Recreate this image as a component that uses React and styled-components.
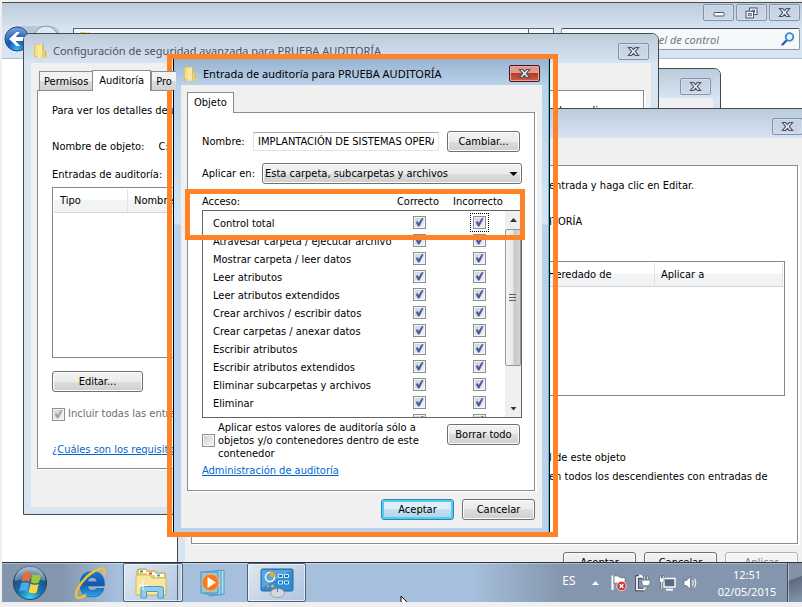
import React from 'react';
import styled, { createGlobalStyle, css } from 'styled-components';

const uiFont = '"DejaVu Sans Condensed", "Liberation Sans", sans-serif';
const titleFont = '"Noto Sans", "Open Sans", sans-serif';

const GlobalStyle = createGlobalStyle`
  *, *::before, *::after { box-sizing: border-box; }
  body { margin: 0; background: #f0f0f0; color: #000; font: 11px/16px ${uiFont}; }
  button, input, select { font: inherit; color: inherit; margin: 0; }
`;

/* ---------- desktop and explorer ---------- */

const Page = styled.div`
  display: flex;
  min-height: 100vh;
  padding: 2px 0 5px 2px;
  overflow: hidden;
`;

const Desktop = styled.main`
  position: relative;
  flex: 1;
  display: flex;
  flex-direction: column;
  overflow: hidden;
  background: #fff;
  border-top: 1px solid #4a4f55;
`;

const ExplorerHeader = styled.header`
  display: flex;
  flex-direction: column;
  justify-content: space-between;
  height: 56px;
  padding: 1px 2px 6px 0;
  background: linear-gradient(#bccbda, #d7e4f2 26px);
  border-bottom: 1px solid #b0c0d0;
`;

const CaptionButtons = styled.div`
  display: flex;
  justify-content: flex-end;
  gap: 2px;
`;

const CaptionButton = styled.button`
  display: grid;
  place-items: center;
  flex: none;
  width: 31px;
  height: 17px;
  padding: 0;
  border: 1px solid ${p => (p.$danger ? '#4d1511' : '#8191ae')};
  border-radius: 2px;
  box-shadow: inset 0 0 0 1px ${p => (p.$danger ? '#eaa79c' : '#d3dfec')};
  background: ${p => (p.$danger
    ? 'linear-gradient(#dd9a90 0 45%, #b83a26 50%, #c9604a)'
    : 'linear-gradient(#c3d1e0, #ccd9e7)')};
`;

const AddressRow = styled.div`
  display: flex;
  align-items: center;
`;

const NavButtons = styled.div`
  width: 71px;
  height: 27px;
`;

const AddressBar = styled.div`
  display: flex;
  align-items: center;
  justify-content: space-between;
  flex: 1;
  height: 22px;
  padding-left: 5px;
  background: #f5f8fb;
  border: 1px solid #59616a;
`;

const AddressRefresh = styled.div`
  width: 25px;
  height: 20px;
  border-left: 1px solid #59616a;
`;

const SearchBox = styled.div`
  display: flex;
  align-items: center;
  flex: none;
  width: 30%;
  height: 22px;
  margin-left: 7px;
  padding-right: 4px;
  background: #f5f9fc;
  border: 1px solid #8d98a4;
  border-top-color: #4a4f55;
  border-radius: 2px;
`;

const SearchInput = styled.input`
  flex: 1;
  min-width: 0;
  border: 0;
  background: none;
  padding: 2px 62px 0 0;
  text-align: right;
  font: italic 11px/18px ${titleFont};
  &::placeholder { color: #777; opacity: 1; }
`;

/* ---------- windows ---------- */

const Window = styled.section`
  position: absolute;
  display: flex;
  flex-direction: column;
  overflow: hidden;
  padding: 0 7px 7px;
  border: 1px solid #45484c;
  border-radius: 7px 7px 0 0;
  background: #d7e4f2;
`;

const AdvancedWindow = styled(Window)`
  left: 21px;
  top: 30px;
  width: 636px;
  height: 482px;
`;

const PropertiesWindow = styled(Window)`
  left: 300px;
  top: 65px;
  width: 419px;
  height: 300px;
`;

const AuditListWindow = styled(Window)`
  left: 175px;
  right: -11px;
  top: 105px;
  height: 520px;
  border-radius: 0;
`;

const EntryWindow = styled(Window)`
  left: 171px;
  top: 56px;
  width: 377px;
  height: 473px;
  padding: 0 7px 4px;
  border-width: 0 1px;
  border-color: #000;
  border-radius: 0;
  box-shadow: inset -1px 0 #3fc8ea;
  background: linear-gradient(#b9d1ea 26px, #d5e5f5 165px, #b9d1ea 166px);
`;

const TitleBar = styled.header`
  display: flex;
  align-items: center;
  flex: none;
  gap: 5px;
  height: 29px;
  margin: 0 -7px;
  padding: 5px ${p => p.$end || 9}px 0 9px;
  background: linear-gradient(#bccbda, #d7e4f2);
`;

const ActiveTitleBar = styled(TitleBar)`
  height: 26px;
  margin: 0 -6px 0 -7px;
  padding: 3px 8px 0 9px;
  background: linear-gradient(#99b4d1, #b9d1ea);
`;

const Title = styled.h1`
  flex: 1;
  margin: 0;
  color: ${p => (p.$dim ? '#4c5560' : '#000')};
  font: 400 11px/18px ${titleFont};
  white-space: nowrap;
`;

const Client = styled.div`
  display: flex;
  flex: 1;
  flex-direction: column;
  min-height: 0;
  padding: ${p => p.$pad || '7px 7px 8px 6px'};
  background: #f0f0f0;
`;

const Tabs = styled.div`
  position: relative;
  display: flex;
  align-items: flex-end;
  margin-bottom: -1px;
  z-index: 1;
`;

const Tab = styled.button`
  height: ${p => (p.$active ? 21 : 19)}px;
  padding: ${p => (p.$active ? 0 : 2)}px ${p => (p.$active ? 6 : 4)}px 1px;
  margin-bottom: ${p => (p.$active ? 0 : 1)}px;
  margin-left: ${p => (p.$first ? 2 : 0)}px;
  border: 1px solid #898c95;
  border-bottom: 0;
  border-right-width: ${p => (p.$active ? 1 : 0)}px;
  background: ${p => (p.$active ? '#fff' : 'linear-gradient(#f2f2f2 50%, #dcdcdc 50%, #d2d2d2)')};
  line-height: 16px;
`;

const Panel = styled.div`
  display: flex;
  flex-direction: column;
  flex: none;
  height: 379px;
  padding: ${p => p.$pad};
  border: 1px solid #898c95;
  box-shadow: 2px 1px 0 #fff;
  background: #fff;
`;

const Line = styled.p`
  display: flex;
  gap: ${p => p.$gap || 0}px;
  margin: ${p => p.$top || 0}px 0 0;
  white-space: nowrap;
`;

const FarText = styled.span`
  margin-left: auto;
  margin-right: 10px;
`;

const Button = styled.button`
  flex: none;
  width: ${p => (p.$wide ? 91 : 73)}px;
  height: 21px;
  padding: 1px 0 0;
  border: 1px solid #707070;
  border-radius: 3px;
  box-shadow: inset 0 0 0 1px #fcfcfc;
  background: linear-gradient(#f2f2f2, #ebebeb 50%, #dddddd 50%, #cfcfcf);
  line-height: 18px;
  ${p => p.$primary && css`
    border-color: #3c7fb1;
    box-shadow: inset 0 0 0 2px #48d0f5;
    background: linear-gradient(#e6f2f9, #dcebf5 50%, #c5dfee 50%, #b0d3e8);
  `}
  &:disabled {
    border-color: #adb2b5;
    background: #f4f4f4;
    color: #838383;
  }
`;

const Spaced = styled.div`
  display: flex;
  margin-top: ${p => p.$top}px;
`;

const Link = styled.a`
  color: #0066cc;
  text-decoration: underline;
`;

const ColumnTable = styled.table`
  display: block;
  flex: none;
  height: ${p => p.$height}px;
  margin-top: ${p => p.$top}px;
  padding: 1px;
  border: 1px solid #828790;
  border-collapse: collapse;
  background: #fff;
  thead { display: block; }
  tr {
    display: flex;
    height: 24px;
    border-bottom: 1px solid #d5d5d5;
    background: linear-gradient(#fff 45%, #f3f4f6 50%, #f1f2f4);
  }
`;

const ColumnHead = styled.th`
  flex: ${p => (p.$width ? 'none' : '1')};
  width: ${p => (p.$width ? `${p.$width}px` : 'auto')};
  padding: 4px 6px 0;
  border-right: 1px solid #dfe1e4;
  font-weight: 400;
  text-align: left;
`;

/* ---------- check boxes ---------- */

const CheckCell = styled.span`
  display: inline-grid;
  flex: none;
  width: 13px;
  height: 13px;
  outline: ${p => (p.$focus ? '1px dotted #000' : 'none')};
  outline-offset: 2px;
  > * { grid-area: 1 / 1; }
  svg { pointer-events: none; }
`;

const CheckInput = styled.input`
  appearance: none;
  width: 13px;
  height: 13px;
  border: 1px solid #8e8f8f;
  box-shadow: inset 0 0 0 1px #f4f4f4;
  background: linear-gradient(135deg, #cbcfd5, #f6f6f6);
`;

const CheckLabel = styled.label`
  display: flex;
  align-items: center;
  gap: 3px;
  color: ${p => (p.$dim ? '#6d6d6d' : '#000')};
  line-height: ${p => (p.$dim ? 16 : 13)}px;
  white-space: ${p => (p.$dim ? 'nowrap' : 'normal')};
`;

function Check({ checked, focus, disabled, ...rest }) {
  return (
    <CheckCell $focus={focus}>
      <CheckInput type="checkbox" defaultChecked={checked} disabled={disabled} {...rest} />
      {checked && (
        <svg width="13" height="13" viewBox="0 0 13 13" aria-hidden="true">
          <path d="M3 6.2 L4.6 5.4 L5.7 7.4 L8.8 2.4 L10.2 2.4 L6.3 10.2 L5.2 10.2 Z"
            fill={disabled ? '#a0a0a0' : '#42569c'} stroke={disabled ? '#a0a0a0' : '#42569c'} strokeWidth=".5" />
        </svg>
      )}
    </CheckCell>
  );
}

/* ---------- audit entry form ---------- */

const FormRow = styled.div`
  display: flex;
  align-items: center;
  margin-top: ${p => p.$top || 0}px;
  padding-right: ${p => p.$end || 0}px;
`;

const FieldLabel = styled.label`
  flex: none;
  width: ${p => p.$width}px;
`;

const NameInput = styled.input`
  flex: 1;
  min-width: 0;
  height: 19px;
  margin-right: 8px;
  padding: 0 4px;
  border: 1px solid #e2e3ea;
  border-top-color: #abadb3;
  background: #fff;
`;

const SelectWrap = styled.div`
  display: grid;
  flex: 1;
  align-items: center;
  > * { grid-area: 1 / 1; }
  svg { justify-self: end; margin-right: 4px; pointer-events: none; }
`;

const Select = styled.select`
  appearance: none;
  width: 100%;
  height: 21px;
  padding: 1px 20px 0 2px;
  border: 1px solid #707070;
  border-radius: 3px;
  box-shadow: inset 0 0 0 1px #fcfcfc;
  background: linear-gradient(#f2f2f2, #ebebeb 50%, #dddddd 50%, #cfcfcf);
`;

const AccessHead = styled.div`
  display: grid;
  grid-template-columns: 1fr 60px 60px;
  margin-top: 10px;
  padding-right: 14px;
  span + span { text-align: center; }
`;

const AccessList = styled.div`
  display: flex;
  flex: none;
  height: 208px;
  border: 1px solid #646464;
  background: #fff;
`;

const AccessRows = styled.div`
  flex: 1;
  overflow: hidden;
  padding: 3px 0 0 10px;
`;

const AccessRow = styled.div`
  display: grid;
  grid-template-columns: 1fr 60px 32px;
  align-items: start;
  height: 18px;
  line-height: 20px;
  white-space: nowrap;
  ${CheckCell} { margin-top: 2px; }
`;

const ScrollTrack = styled.div`
  display: flex;
  flex-direction: column;
  width: 16px;
  background: #efefef;
`;

const ScrollArrow = styled.button`
  display: grid;
  place-items: center;
  height: 17px;
  padding: 0;
  border: 0;
  background: none;
`;

const ScrollThumb = styled.div`
  display: grid;
  place-items: center;
  height: 137px;
  margin: 1px 0 auto;
  border: 1px solid #979797;
  border-radius: 2px;
  background: linear-gradient(90deg, #f5f5f5, #e6e6e6 50%, #c8c9cc 60%, #d4d4d6);
`;

const ApplyRow = styled.div`
  display: flex;
  align-items: flex-start;
  justify-content: space-between;
  margin-top: 3px;
  padding-right: 2px;
  ${Button} { margin-top: 3px; }
  ${CheckLabel} { flex: 1; }
`;

const DialogButtons = styled.div`
  display: flex;
  justify-content: flex-end;
  gap: 8px;
  margin-top: 8px;
`;

const Side = styled.div`
  display: flex;
  flex-direction: column;
  align-self: flex-end;
  width: 236px;
`;

const Highlight = styled.div`
  position: absolute;
  border: 5px solid #ff8227;
  pointer-events: none;
`;

const DialogHighlight = styled(Highlight)`
  left: 165px;
  top: 51px;
  width: 391px;
  height: 483px;
`;

const AccessHighlight = styled(Highlight)`
  left: 183px;
  top: 186px;
  width: 340px;
  height: 51px;
`;

/* ---------- taskbar ---------- */

const Taskbar = styled.footer`
  position: relative;
  display: flex;
  flex: none;
  height: 40px;
  margin-top: auto;
  border-top: 1px solid #2d3640;
  background: linear-gradient(90deg, #8496ad 60px, #a6bfdc 115px, #a6bfdc 470px, #8496ad 560px);
  box-shadow: inset 0 1px rgba(255, 255, 255, .35);
`;

const TaskButton = styled.button`
  display: grid;
  place-items: center;
  width: ${p => p.$width}px;
  padding: 0;
  border: 0;
  background: none;
  ${p => p.$open && css`
    border: 1px solid #4d6079;
    border-radius: 2px;
    box-shadow: inset 0 0 0 1px rgba(255, 255, 255, .6)${p.$stack ? ', inset -4px 0 #c3d0e0, inset -5px 0 #4d6079' : ''};
    background: linear-gradient(135deg, #dfe7f2, #c3d2e6 60%, #afc5e0);
    padding-right: ${p.$stack ? 5 : 0}px;
  `}
`;

const Tray = styled.div`
  display: flex;
  align-items: center;
  margin-left: auto;
  color: #fff;
  font: 11px/17px ${titleFont};
`;

const Language = styled.span`
  width: 28px;
  margin-bottom: 5px;
  text-align: center;
  font-size: 12px;
`;

const TrayButton = styled.button`
  display: grid;
  place-items: center;
  width: 24px;
  height: 24px;
  padding: 0;
  border: 0;
  background: none;
`;

const Clock = styled.time`
  width: 74px;
  margin: 0 3px 0 7px;
  text-align: center;
`;

const ShowDesktop = styled.button`
  align-self: stretch;
  width: 15px;
  padding: 0;
  border: 1px solid #3f4c5c;
  border-width: 0 0 0 1px;
  box-shadow: inset 1px 0 rgba(255, 255, 255, .4);
  background: linear-gradient(160deg, #8592a3 40%, #5c6b7e 42%, #8696ab);
`;

const Pointer = styled.svg`
  position: absolute;
  left: 398px;
  bottom: -13px;
`;

/* ---------- drawings ---------- */

const CloseIcon = () => (
  <svg width="13" height="11" viewBox="0 0 13 11" aria-hidden="true">
    <path d="M1.5 1.5 H4.6 L6.5 3.6 L8.4 1.5 H11.5 L8.3 5.5 L11.5 9.5 H8.4 L6.5 7.4 L4.6 9.5 H1.5 L4.7 5.5 Z"
      fill="#f7f8fa" stroke="#4b5266" strokeWidth="1.2" />
  </svg>
);

const MinimizeIcon = () => (
  <svg width="12" height="11" viewBox="0 0 12 11" aria-hidden="true">
    <rect x="1" y="5.5" width="10" height="3.5" rx=".8" fill="#fff" stroke="#4b5266" />
  </svg>
);

const RestoreIcon = () => (
  <svg width="13" height="12" viewBox="0 0 13 12" aria-hidden="true">
    <rect x="4.5" y="1" width="7.5" height="6.5" fill="#fff" stroke="#4b5266" />
    <rect x="7" y="3.2" width="2.6" height="2" fill="#cbd8e6" stroke="#4b5266" strokeWidth=".8" />
    <rect x="1" y="4.2" width="7.5" height="6.8" fill="#fff" stroke="#4b5266" />
    <rect x="3.3" y="6.6" width="3" height="2.2" fill="#cbd8e6" stroke="#4b5266" strokeWidth=".8" />
  </svg>
);

const FolderIcon = () => (
  <svg width="15" height="16" viewBox="0 0 15 16" aria-hidden="true">
    <path d="M1 1 H7 V14.500 L5 15.500 L1 13.500 Z" fill="#e0c260" />
    <path d="M2 1.500 H5 V13.500 L2 13 Z" fill="#f3dc83" />
    <path d="M4.500 2 L9.500 1 V14 L4.500 15.500 Z" fill="#f9e89f" />
    <path d="M9.500 1 L10.800 1.800 V14 L9.500 14 Z" fill="#d3b04a" />
    <path d="M9.800 7 L14 7.600 V14.500 L7 15.500 L9.800 13.800 Z" fill="#ead06c" />
    <path d="M12.500 8.500 V12.500" stroke="#8fb8dc" strokeWidth="1" />
  </svg>
);

const NavIcon = () => (
  <svg width="62" height="27" viewBox="0 0 62 27" aria-hidden="true">
    <defs>
      <radialGradient id="nav" cx=".5" cy=".9" r=".9">
        <stop offset="0" stopColor="#35b8f2" />
        <stop offset=".45" stopColor="#1455b0" />
        <stop offset="1" stopColor="#7ea4d8" />
      </radialGradient>
    </defs>
    <path d="M14 1 H48 Q58 1 58 12 V26 H14 Z" fill="#b8c6d5" />
    <circle cx="44" cy="13" r="12" fill="#dfe8f1" stroke="#8795a8" />
    <circle cx="15" cy="14" r="12" fill="url(#nav)" stroke="#274a7e" />
    <path d="M7 14 L14.5 7 H18 L13.5 12 H23 V16 H13.5 L18 21 H14.5 Z" fill="#fff" />
  </svg>
);

const SearchIcon = () => (
  <svg width="14" height="14" viewBox="0 0 14 14" aria-hidden="true">
    <path d="M1.5 12.5 L5.5 8.5" stroke="#2a5fa8" strokeWidth="2.4" strokeLinecap="round" />
    <circle cx="8.5" cy="5" r="3.8" fill="#e6f3fc" stroke="#3d86cc" strokeWidth="1.8" />
  </svg>
);

const ArrowIcon = ({ up, wide, color = '#333' }) => (
  <svg width="9" height="6" viewBox="0 0 9 6" aria-hidden="true">
    <path d={up ? 'M1 5 L4.5 1 L8 5 Z' : wide ? 'M.5 1 H8.5 L4.5 5 Z' : 'M1.5 1 H7.5 L4.5 4.5 Z'} fill={color} />
  </svg>
);

const StartIcon = () => (
  <svg width="36" height="36" viewBox="0 0 38 38" aria-hidden="true">
    <defs>
      <radialGradient id="orb" cx=".5" cy=".95" r=".9">
        <stop offset="0" stopColor="#35d5f8" />
        <stop offset=".4" stopColor="#1a74ae" />
        <stop offset=".75" stopColor="#204f7c" />
        <stop offset="1" stopColor="#7b9fbd" />
      </radialGradient>
    </defs>
    <circle cx="19" cy="19" r="17.5" fill="url(#orb)" stroke="#24435f" />
    <path d="M3 17 A16 16 0 0 1 35 17 Q19 12 3 17" fill="#fff" opacity=".3" />
    <path d="M12.500 9 Q16.500 6.500 20.500 9 L18.500 17.800 Q14.500 15.500 10 18 Z" fill="#ef6a2d" />
    <path d="M21.800 9.500 Q26 12 31 9.500 L28.500 18.500 Q24 20.500 19.800 18.300 Z" fill="#94cc3c" />
    <path d="M9.700 19.300 Q14 17 18.200 19.200 L16.200 28 Q12 25.500 7.500 28.200 Z" fill="#49a9ec" />
    <path d="M19.500 19.800 Q23.500 22 28.200 20 L26 29 Q21.500 31 17.500 28.700 Z" fill="#ffd141" />
  </svg>
);

const BrowserIcon = () => (
  <svg width="34" height="34" viewBox="0 0 34 34" aria-hidden="true">
    <defs>
      <linearGradient id="ie" x2="0" y2="1">
        <stop offset="0" stopColor="#1a77cd" />
        <stop offset=".5" stopColor="#1059ae" />
        <stop offset="1" stopColor="#2aa8f0" />
      </linearGradient>
    </defs>
    <path d="M31.500 20 H14.500 Q15 24.500 19.500 24.500 Q22.500 24.500 23.500 22.500 H31 Q28.500 31 19.500 31 Q7 31 7 18.500 Q7 5.500 19.500 5.500 Q32 5.500 31.500 20 Z M14.600 15.800 H24 Q23.500 11.500 19.300 11.500 Q15 11.500 14.600 15.800 Z"
      fill="url(#ie)" fillRule="evenodd" stroke="#0b4a96" strokeWidth=".5" />
    <path d="M30.500 9 Q34 1.500 27 3 Q17 6 9 16 Q1 27 3.500 31 Q6 34 13 28.500" fill="none" stroke="#f3c234" strokeWidth="2.400" />
  </svg>
);

const LibraryIcon = () => (
  <svg width="34" height="34" viewBox="0 0 34 34" aria-hidden="true">
    <path d="M3 5 Q3 3 5 3 H12 L14 5 H22 L24 7 H31 V29 H3 Z" fill="#ecd173" stroke="#bd9a3c" strokeWidth=".8" />
    <path d="M5 4 H12 V7 H5 Z M13 6 H21 V9 H13 Z M21 8 H30 V11 H21 Z" fill="#fff" />
    <path d="M6 4.500 H9 V6.500 H6 Z" fill="#30a848" />
    <path d="M15 6.500 H18 V8.500 H15 Z" fill="#d9432e" />
    <path d="M23 8.500 H26 V10.500 H23 Z" fill="#3b9ae0" />
    <path d="M2 9 H16 L18 12 H32 V29 H2 Z" fill="#f8e79f" stroke="#cfae50" strokeWidth=".8" />
    <path d="M7 32 V23 Q7 20.500 9.500 20.500 H27 Q29.500 20.500 29.500 23 V32 H24 V25.500 H12.500 V32 Z" fill="#8fcdeb" stroke="#4b9bc7" />
    <path d="M9 15 V24 M5 19.500 H14" stroke="#fff" strokeWidth="1" />
  </svg>
);

const MediaIcon = () => (
  <svg width="32" height="28" viewBox="0 0 32 28" aria-hidden="true">
    <path d="M10 3 L25 1 V25 L10 27 Z" fill="#b5dcf0" stroke="#4e9ac0" />
    <path d="M6 3 L22 1.500 V26 L6 25 Z" fill="#a1d0ea" stroke="#4e9ac0" />
    <path d="M2 3 H19 V24 H2 Z" fill="#8dc6e6" stroke="#4390ba" />
    <circle cx="11.500" cy="13.500" r="8.500" fill="#f57a1c" stroke="#fbb878" />
    <path d="M8.500 8 L17 13.500 L8.500 19 Z" fill="#fff" />
  </svg>
);

const ControlPanelIcon = () => (
  <svg width="34" height="30" viewBox="0 0 34 30" aria-hidden="true">
    <rect x="1" y="1" width="32" height="22" rx="1.500" fill="#2f8dd2" stroke="#23669f" />
    <path d="M1.500 2 H32 L2 20 Z" fill="#6fb7e6" opacity=".6" />
    <circle cx="10" cy="9" r="4.500" fill="none" stroke="#e8f5fd" strokeWidth="1.600" />
    <path d="M10 9 V3.500 A5.500 5.500 0 0 1 15.500 9 Z" fill="#f6a52b" />
    <circle cx="8" cy="18" r="1.500" fill="#f28f2c" />
    <circle cx="12.500" cy="18" r="1.500" fill="#f6b44a" />
    <path d="M18.500 6.500 H22.500 V9.500 H18.500 Z M24.500 6.500 H28.500 V9.500 H24.500 Z M18.500 13 H22.500 V16 H18.500 Z M24.500 13 H28.500 V16 H24.500 Z" fill="#1469b3" stroke="#d9effc" />
    <ellipse cx="17.500" cy="25" rx="7" ry="4.500" fill="#d5d7da" stroke="#83878c" strokeWidth=".7" />
    <path d="M17.500 20.500 V24" stroke="#777" />
  </svg>
);

const FlagIcon = () => (
  <svg width="18" height="18" viewBox="0 0 18 18" aria-hidden="true">
    <path d="M2.500 1.500 V16" stroke="#fff" strokeWidth="2" />
    <path d="M4 2 Q7 1 9.500 3 Q12 4.500 15 3.500 V10 Q12 11 9 9.500 Q7 8.500 4 9.500 Z" fill="#fff" stroke="#4f5c6c" strokeWidth=".6" />
    <circle cx="11.500" cy="12" r="4.700" fill="#d8322a" stroke="#fff" strokeWidth=".7" />
    <path d="M9.700 10.200 L13.300 13.800 M13.300 10.200 L9.700 13.800" stroke="#fff" strokeWidth="1.500" />
  </svg>
);

const PowerIcon = () => (
  <svg width="18" height="18" viewBox="0 0 18 18" aria-hidden="true">
    <path d="M8 3 H3 V15.500 H10" fill="none" stroke="#333e4c" strokeWidth="3.400" />
    <path d="M5 1.500 H8 M9 3 H3 V15.500 H10.500 V13" fill="none" stroke="#fff" strokeWidth="1.700" />
    <path d="M8 6 H16 V9 Q16 12 12 12 Q8 12 8 9 Z M9.500 2 H11 V6 H9.500 Z M13 2 H14.500 V6 H13 Z M11.200 12 H12.800 V16 H11.200 Z" fill="#fff" stroke="#3c4857" strokeWidth=".5" />
  </svg>
);

const NetworkIcon = () => (
  <svg width="18" height="18" viewBox="0 0 18 18" aria-hidden="true">
    <rect x="6" y="4.500" width="11" height="8.500" fill="#59697e" stroke="#fff" strokeWidth="1.400" />
    <path d="M8 15.700 H15" stroke="#fff" strokeWidth="1.800" />
    <path d="M1.500 1.500 H3 V4 H4.500 V1.500 H6 V7 Q6 8 4.600 8.300 V16 H3 V8.300 Q1.500 8 1.500 7 Z" fill="#fff" stroke="#34404e" strokeWidth=".5" />
  </svg>
);

const VolumeIcon = () => (
  <svg width="18" height="18" viewBox="0 0 18 18" aria-hidden="true">
    <path d="M2 6.500 H4.500 L8.500 2.500 V15.500 L4.500 11.500 H2 Z" fill="#fff" stroke="#4b5868" strokeWidth=".6" />
    <path d="M10.500 6 Q12 9 10.500 12 M12.700 4.500 Q15 9 12.700 13.500" fill="none" stroke="#fff" strokeWidth="1" />
  </svg>
);

/* ---------- data ---------- */

const permissions = [
  'Control total',
  'Atravesar carpeta / ejecutar archivo',
  'Mostrar carpeta / leer datos',
  'Leer atributos',
  'Leer atributos extendidos',
  'Crear archivos / escribir datos',
  'Crear carpetas / anexar datos',
  'Escribir atributos',
  'Escribir atributos extendidos',
  'Eliminar subcarpetas y archivos',
  'Eliminar',
  'Permisos de lectura',
];

const CloseButton = ({ danger }) => (
  <CaptionButton aria-label="Cerrar" $danger={danger}><CloseIcon /></CaptionButton>
);

function Explorer() {
  return (
    <ExplorerHeader>
      <CaptionButtons>
        <CaptionButton aria-label="Minimizar"><MinimizeIcon /></CaptionButton>
        <CaptionButton aria-label="Restaurar"><RestoreIcon /></CaptionButton>
        <CloseButton />
      </CaptionButtons>
      <AddressRow>
        <NavButtons><NavIcon /></NavButtons>
        <AddressBar><FolderIcon /><AddressRefresh /></AddressBar>
        <SearchBox>
          <SearchInput aria-label="Buscar" placeholder="Panel de control" />
          <SearchIcon />
        </SearchBox>
      </AddressRow>
    </ExplorerHeader>
  );
}

function AdvancedSecurity() {
  return (
    <AdvancedWindow>
      <TitleBar>
        <FolderIcon />
        <Title $dim>Configuración de seguridad avanzada para PRUEBA AUDITORÍA</Title>
        <CloseButton />
      </TitleBar>
      <Client $pad="7px 7px 37px 6px">
        <Tabs>
          <Tab $first>Permisos</Tab>
          <Tab $active>Auditoría</Tab>
          <Tab>Pro</Tab>
        </Tabs>
        <Panel $pad="12px 14px 0">
          <Line>
            <span>Para ver los detalles de u</span>
            <FarText>haga clic en</FarText>
          </Line>
          <Line $top={20} $gap={14}><span>Nombre de objeto:</span><span>C:\</span></Line>
          <Line $top={12}>Entradas de auditoría:</Line>
          <ColumnTable $height={171} $top={4}>
            <thead>
              <tr><ColumnHead $width={74}>Tipo</ColumnHead><ColumnHead>Nombre</ColumnHead></tr>
            </thead>
          </ColumnTable>
          <Spaced $top={13}><Button $wide>Editar...</Button></Spaced>
          <Spaced $top={14}>
            <CheckLabel $dim><Check checked disabled />Incluir todas las entrad</CheckLabel>
          </Spaced>
          <Line $top={20}><Link href="#requisitos">¿Cuáles son los requisito</Link></Line>
        </Panel>
      </Client>
    </AdvancedWindow>
  );
}

function AuditList() {
  return (
    <AuditListWindow>
      <TitleBar $end={9}><Title /><CloseButton /></TitleBar>
      <Client $pad="27px 7px 8px 6px">
        <Panel $pad="12px 12px 0 14px">
          <Side>
            <Line>entrada y haga clic en Editar.</Line>
            <Line $top={20}>ITORÍA</Line>
          </Side>
          <ColumnTable $height={135} $top={31}>
            <thead>
              <tr>
                <ColumnHead />
                <ColumnHead $width={113}>Heredado de</ColumnHead>
                <ColumnHead $width={128}>Aplicar a</ColumnHead>
              </tr>
            </thead>
          </ColumnTable>
          <Side>
            <Line $top={54}>l de este objeto</Line>
            <Line $top={3}>en todos los descendientes con entradas de</Line>
          </Side>
        </Panel>
        <DialogButtons>
          <Button>Aceptar</Button>
          <Button>Cancelar</Button>
          <Button disabled>Aplicar</Button>
        </DialogButtons>
      </Client>
    </AuditListWindow>
  );
}

function AuditEntry() {
  return (
    <EntryWindow>
      <ActiveTitleBar>
        <FolderIcon />
        <Title>Entrada de auditoría para PRUEBA AUDITORÍA</Title>
        <CloseButton danger />
      </ActiveTitleBar>
      <Client>
        <Tabs><Tab $active>Objeto</Tab></Tabs>
        <Panel $pad="18px 12px 0 14px">
          <FormRow $end={2}>
            <FieldLabel htmlFor="name" $width={51}>Nombre:</FieldLabel>
            <NameInput id="name" defaultValue="IMPLANTACIÓN DE SISTEMAS OPERATIVOS" />
            <Button>Cambiar...</Button>
          </FormRow>
          <FormRow $top={11}>
            <FieldLabel htmlFor="scope" $width={60}>Aplicar en:</FieldLabel>
            <SelectWrap>
              <Select id="scope"><option>Esta carpeta, subcarpetas y archivos</option></Select>
              <ArrowIcon wide color="#000" />
            </SelectWrap>
          </FormRow>
          <AccessHead><span>Acceso:</span><span>Correcto</span><span>Incorrecto</span></AccessHead>
          <AccessList>
            <AccessRows>
              {permissions.map((name, i) => (
                <AccessRow key={name}>
                  <span>{name}</span>
                  <Check checked aria-label={`${name}: correcto`} />
                  <Check checked focus={i === 0} aria-label={`${name}: incorrecto`} />
                </AccessRow>
              ))}
            </AccessRows>
            <ScrollTrack>
              <ScrollArrow aria-label="Subir"><ArrowIcon up /></ScrollArrow>
              <ScrollThumb>
                <svg width="8" height="9" viewBox="0 0 8 9" aria-hidden="true">
                  <path d="M0 1.500 H7 M0 4.500 H7 M0 7.500 H7" stroke="#5d5d5d" />
                </svg>
              </ScrollThumb>
              <ScrollArrow aria-label="Bajar"><ArrowIcon /></ScrollArrow>
            </ScrollTrack>
          </AccessList>
          <ApplyRow>
            <CheckLabel>
              <Check />
              <span>Aplicar estos valores de auditoría sólo a objetos y/o contenedores dentro de este contenedor</span>
            </CheckLabel>
            <Button>Borrar todo</Button>
          </ApplyRow>
          <Line $top={3}><Link href="#auditoria">Administración de auditoría</Link></Line>
        </Panel>
        <DialogButtons>
          <Button $primary>Aceptar</Button>
          <Button>Cancelar</Button>
        </DialogButtons>
      </Client>
    </EntryWindow>
  );
}

function TaskbarView() {
  return (
    <Taskbar>
      <TaskButton $width={55} aria-label="Inicio"><StartIcon /></TaskButton>
      <TaskButton $width={66} aria-label="Internet Explorer"><BrowserIcon /></TaskButton>
      <TaskButton $width={60} $open $stack aria-label="Explorador"><LibraryIcon /></TaskButton>
      <TaskButton $width={64} aria-label="Reproductor"><MediaIcon /></TaskButton>
      <TaskButton $width={59} $open aria-label="Panel de control"><ControlPanelIcon /></TaskButton>
      <Tray>
        <Language>ES</Language>
        <TrayButton aria-label="Mostrar iconos ocultos"><ArrowIcon up color="#fff" /></TrayButton>
        <TrayButton aria-label="Centro de actividades"><FlagIcon /></TrayButton>
        <TrayButton aria-label="Energía"><PowerIcon /></TrayButton>
        <TrayButton aria-label="Red"><NetworkIcon /></TrayButton>
        <TrayButton aria-label="Volumen"><VolumeIcon /></TrayButton>
        <Clock>12:51<br />02/05/2015</Clock>
        <ShowDesktop aria-label="Mostrar escritorio" />
      </Tray>
      <Pointer width="13" height="20" viewBox="0 0 13 20" aria-hidden="true">
        <path d="M1 1 V15 L4.500 12 L7 17 L9 16 L6.800 11.300 H11 Z" fill="#fff" stroke="#000" />
      </Pointer>
    </Taskbar>
  );
}

export default function App() {
  return (
    <Page>
      <GlobalStyle />
      <Desktop>
        <Explorer />
        <PropertiesWindow>
          <TitleBar><Title /><CloseButton /></TitleBar>
          <Client />
        </PropertiesWindow>
        <AdvancedSecurity />
        <AuditList />
        <AuditEntry />
        <DialogHighlight />
        <AccessHighlight />
        <TaskbarView />
      </Desktop>
    </Page>
  );
}
